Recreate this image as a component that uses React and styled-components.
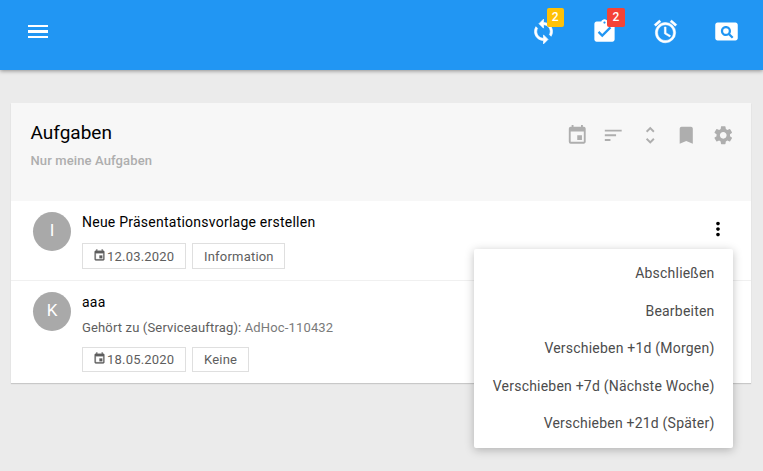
import React from 'react';
import styled, { createGlobalStyle } from 'styled-components';
import {
  MdSync, MdAssignmentTurnedIn, MdAlarm, MdPageview, MdEvent, MdSort,
  MdUnfoldMore, MdBookmark, MdSettings, MdMoreVert,
} from 'react-icons/md';

const GlobalStyle = createGlobalStyle`
  * { box-sizing: border-box; }
  body {
    margin: 0;
    background: #ebebeb;
    font-family: Roboto, sans-serif;
    overflow: hidden;
  }
  svg { display: block; flex: none; }
`;

const Page = styled.div`
  height: 471px;
  display: flex;
  flex-direction: column;
`;

const Header = styled.header`
  flex: none;
  height: 70px;
  padding: 0 23.5px 8px 28px;
  background: #2196f3;
  box-shadow: 0 1px 4px rgba(0, 0, 0, 0.4);
  display: flex;
  align-items: center;
  justify-content: space-between;
`;

const Burger = styled.button`
  width: 20px;
  height: 13px;
  padding: 0;
  margin-top: 1px;
  border: 0;
  background: none;
  display: flex;
  flex-direction: column;
  justify-content: space-between;
`;

const BurgerLine = styled.span`
  height: ${(p) => p.$h}px;
  background: #fff;
`;

const HeaderNav = styled.nav`
  display: flex;
  gap: 33.8px;
  color: #fff;
`;

const NavItem = styled.div`
  position: relative;
  width: 27px;
  height: 27px;

  path:not([fill='none']) {
    stroke: currentColor;
    stroke-width: ${(p) => p.$weight || 0};
  }
`;

const Badge = styled.span`
  position: absolute;
  top: -9.5px;
  left: ${(p) => p.$left}px;
  width: ${(p) => p.$width}px;
  height: 19px;
  border-radius: 2px;
  background: ${(p) => p.$color};
  color: #fff;
  font-size: 12px;
  font-weight: 500;
  line-height: 18px;
  text-align: center;
`;

const Card = styled.main`
  width: 740px;
  margin: 33px 0 0 11px;
  background: #fff;
  box-shadow: 0 1px 1px rgba(0, 0, 0, 0.15);
`;

const CardHeader = styled.div`
  height: 98px;
  padding: 18px 17px 0 19.5px;
  background: #f7f7f7;
  display: flex;
  justify-content: space-between;
`;

const Title = styled.h2`
  margin: 0;
  color: #000;
  font-size: 19px;
  font-weight: 400;
  line-height: 24px;
`;

const Subtitle = styled.div`
  margin-top: 7px;
  color: #aeaeae;
  font-size: 13px;
  font-weight: 500;
  line-height: 18px;
  letter-spacing: 0.12px;
`;

const Tools = styled.div`
  display: flex;
  gap: 14px;
  padding-top: 3px;
  color: #aeaeae;
`;

const Task = styled.article`
  position: relative;
  height: ${(p) => p.$height}px;
  padding: 11px 22px 0;
  display: flex;
  border-bottom: ${(p) => (p.$divided ? '1px solid #f0f0f0' : '0')};
`;

const Avatar = styled.div`
  flex: none;
  width: 38px;
  height: 39px;
  margin-right: 11px;
  border-radius: 50%;
  background: #a9a9a9;
  color: #fff;
  font-size: 17px;
  line-height: 37px;
  text-align: center;
`;

const TaskBody = styled.div`
  flex: 1;
`;

const TaskTitle = styled.div`
  height: 20px;
  color: #000;
  font-size: 14px;
  line-height: 20px;
  letter-spacing: 0.24px;
`;

const Relation = styled.div`
  height: 24px;
  padding-top: 7px;
  color: #5e5e5e;
  font-size: 13px;
  line-height: 18px;
  letter-spacing: 0.15px;
`;

const RelationLink = styled.span`
  color: #7a7a7a;
`;

const Tags = styled.div`
  display: flex;
  gap: 6px;
  margin-top: 11px;
`;

const Tag = styled.span`
  width: ${(p) => p.$width}px;
  height: ${(p) => p.$height}px;
  padding-left: ${(p) => (p.$dated ? 9.5 : 11)}px;
  border: 1px solid #dfdfdf;
  color: #5e5e5e;
  font-size: 13px;
  letter-spacing: 0.2px;
  display: flex;
  align-items: center;
  white-space: nowrap;

  svg {
    margin: -2px 1.5px 0 0;
  }

  path:not([fill='none']) {
    stroke: currentColor;
    stroke-width: 0.5;
  }
`;

const MoreButton = styled.button`
  align-self: flex-start;
  margin: 6px 0 0;
  padding: 0;
  border: 0;
  background: none;
  color: #000;
`;

const Menu = styled.ul`
  position: absolute;
  z-index: 2;
  top: 48px;
  right: 18px;
  width: 259px;
  height: 199px;
  margin: 0;
  padding: 6px 18.5px 5px;
  list-style: none;
  border-radius: 2px;
  background: #fff;
  box-shadow: 0 2px 10px rgba(0, 0, 0, 0.25);
`;

const MenuItem = styled.li`
  height: 37.5px;
  color: #4c4c4c;
  font-size: 14px;
  line-height: 37.5px;
  letter-spacing: 0.21px;
  text-align: right;
  white-space: nowrap;
`;

const actions = [
  'Abschließen',
  'Bearbeiten',
  'Verschieben +1d (Morgen)',
  'Verschieben +7d (Nächste Woche)',
  'Verschieben +21d (Später)',
];

export default function App() {
  return (
    <>
      <GlobalStyle />
      <Page>
        <Header>
          <Burger aria-label="Menü">
            <BurgerLine $h={2} />
            <BurgerLine $h={3} />
            <BurgerLine $h={2} />
          </Burger>
          <HeaderNav>
            <NavItem $weight={0.6}>
              <MdSync size={27} />
              <Badge $color="#ffc107" $left={16.6} $width={17}>2</Badge>
            </NavItem>
            <NavItem>
              <MdAssignmentTurnedIn size={27} />
              <Badge $color="#f44336" $left={16} $width={18}>2</Badge>
            </NavItem>
            <NavItem $weight={0.5}><MdAlarm size={27} /></NavItem>
            <NavItem><MdPageview size={27} /></NavItem>
          </HeaderNav>
        </Header>
        <Card>
          <CardHeader>
            <div>
              <Title>Aufgaben</Title>
              <Subtitle>Nur meine Aufgaben</Subtitle>
            </div>
            <Tools>
              <MdEvent size={22.5} />
              <MdSort size={22.5} />
              <MdUnfoldMore size={22.5} />
              <MdBookmark size={22.5} />
              <MdSettings size={22.5} />
            </Tools>
          </CardHeader>
          <Task $height={80} $divided>
            <Avatar>I</Avatar>
            <TaskBody>
              <TaskTitle>Neue Präsentationsvorlage erstellen</TaskTitle>
              <Tags>
                <Tag $width={104} $height={26} $dated><MdEvent size={13} />12.03.2020</Tag>
                <Tag $width={93} $height={26}>Information</Tag>
              </Tags>
            </TaskBody>
            <MoreButton aria-label="Aktionen"><MdMoreVert size={22} /></MoreButton>
            <Menu>
              {actions.map((label) => <MenuItem key={label}>{label}</MenuItem>)}
            </Menu>
          </Task>
          <Task $height={102}>
            <Avatar>K</Avatar>
            <TaskBody>
              <TaskTitle>aaa</TaskTitle>
              <Relation>
                Gehört zu (Serviceauftrag): <RelationLink>AdHoc-110432</RelationLink>
              </Relation>
              <Tags>
                <Tag $width={104} $height={25} $dated><MdEvent size={13} />18.05.2020</Tag>
                <Tag $width={57} $height={25}>Keine</Tag>
              </Tags>
            </TaskBody>
          </Task>
        </Card>
      </Page>
    </>
  );
}
